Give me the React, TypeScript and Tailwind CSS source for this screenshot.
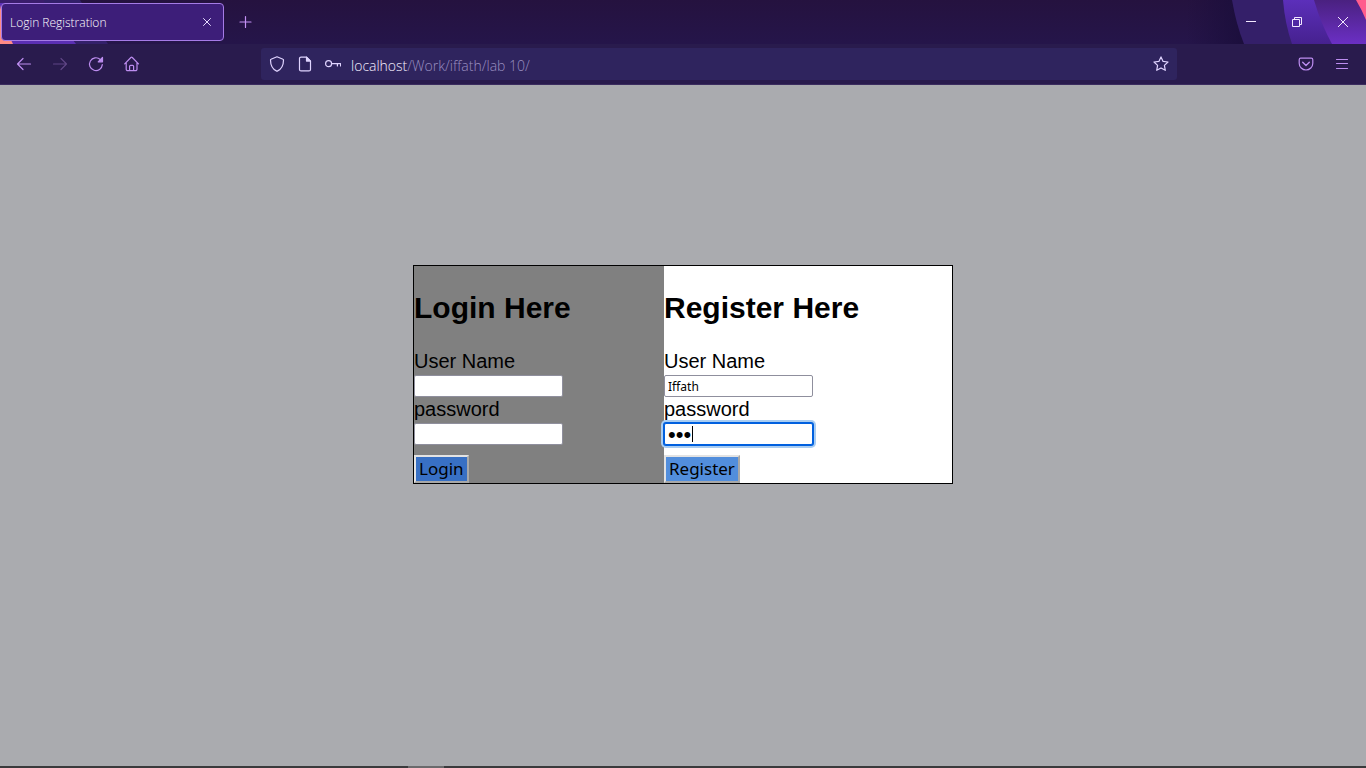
import type { ReactNode } from 'react';

function ThemeArt() {
  return (
    <div aria-hidden="true" className="absolute inset-0 flex justify-between overflow-hidden">
      <svg width="120" height="44" viewBox="0 0 120 44">
        <path d="M0 0H80L108 44H0Z" fill="#33206a" />
        <path d="M0 0H42L76 44H0Z" fill="#5b2fb4" />
        <path d="M0 0H44V3H0Z" fill="#3a1d6c" />
        <path d="M0 5C3 20 7 32 13 44H0Z" fill="#ff8a85" />
      </svg>
      <svg width="180" height="44" viewBox="0 0 180 44">
        <defs>
          <linearGradient id="shade" x1="0" x2="1" y1="0" y2="0">
            <stop offset="0" stopColor="#1b0e3c" stopOpacity="0" />
            <stop offset="1" stopColor="#1b0e3c" />
          </linearGradient>
          <linearGradient id="band" x1="0" x2="0" y1="0" y2="1">
            <stop offset="0" stopColor="#5c2fba" />
            <stop offset="1" stopColor="#46218f" />
          </linearGradient>
          <linearGradient id="edge" x1="0" x2="0" y1="0" y2="1">
            <stop offset="0" stopColor="#4a2180" />
            <stop offset="1" stopColor="#6b2fc4" />
          </linearGradient>
        </defs>
        <path d="M0 0H60V44H0Z" fill="url(#shade)" />
        <path d="M46 0H180V44H58Q50 24 46 0Z" fill="#341f69" />
        <path d="M97 0H180V44H106Q99 24 97 0Z" fill="url(#band)" />
        <path d="M128 0H180V44H146Q135 24 128 0Z" fill="url(#edge)" />
        <path d="M170 0H180V20Q176 10 170 0Z" fill="#ff5c8d" />
      </svg>
    </div>
  );
}

function Icon({ children, size = 16 }: { children: ReactNode; size?: number }) {
  return (
    <svg
      width={size}
      height={size}
      viewBox="0 0 16 16"
      fill="none"
      stroke="currentColor"
      strokeWidth="1.2"
      strokeLinecap="round"
      strokeLinejoin="round"
      aria-hidden="true"
    >
      {children}
    </svg>
  );
}

function IconButton({ label, className = '', children }: { label: string; className?: string; children: ReactNode }) {
  return (
    <button type="button" aria-label={label} className={`flex h-8 w-9 items-center justify-center ${className}`}>
      {children}
    </button>
  );
}

function TitleBar() {
  return (
    <header className="relative h-11 shrink-0 bg-linear-to-b from-[#25123f] to-[#25154a]">
      <ThemeArt />
      <div className="relative flex h-full items-center">
        <div className="ml-px flex h-[38px] w-[223px] items-center justify-between rounded-[4px] border border-[#a57be6] bg-[#3d1e79] pr-2 pl-2 text-white">
          <span className="pt-0.5 font-['Open_Sans','Noto_Sans',sans-serif] text-[12px] font-light">Login Registration</span>
          <button type="button" aria-label="Close tab" className="flex size-4 items-center justify-center text-[#e6dcff]">
            <svg width="8" height="8" viewBox="0 0 8 8" stroke="currentColor" strokeWidth="1" strokeLinecap="round" aria-hidden="true">
              <path d="M.5.5l7 7M7.5.5l-7 7" />
            </svg>
          </button>
        </div>
        <IconButton label="New tab" className="ml-1 text-[#c491f5]">
          <Icon>
            <path d="M7.500 2.500v11M2 8h11" />
          </Icon>
        </IconButton>
        <div className="ml-auto flex text-[#f3e9ff]">
          <button type="button" aria-label="Minimize" className="flex h-10 w-[46px] items-center justify-center">
            <svg width="10" height="10" viewBox="0 0 10 10" stroke="currentColor" aria-hidden="true">
              <path d="M0 4.5h10" />
            </svg>
          </button>
          <button type="button" aria-label="Restore" className="flex h-10 w-[46px] items-center justify-center">
            <svg width="10" height="10" viewBox="0 0 10 10" fill="none" stroke="currentColor" aria-hidden="true">
              <path d="M.5 2.5h7v7h-7zM2.5 2.5v-2h7v7h-2" />
            </svg>
          </button>
          <button type="button" aria-label="Close window" className="flex h-10 w-[46px] items-center justify-center">
            <svg width="10" height="10" viewBox="0 0 10 10" stroke="currentColor" aria-hidden="true">
              <path d="M0 0l10 10M10 0L0 10" />
            </svg>
          </button>
        </div>
      </div>
    </header>
  );
}

function AddressBar() {
  return (
    <div className="flex h-8 min-w-0 flex-1 items-center rounded-[3px] bg-[#2f245e] px-2 text-[#e0d4ff]">
      <Icon>
        <path d="M8 .8l6 2.4c.3.1.5.4.5.7 0 5-1.8 9-6.2 11.2a.7.7 0 0 1-.6 0C3.300 12.900 1.500 8.900 1.500 3.900c0-.3.200-.6.500-.7z" />
      </Icon>
      <span className="ml-3 flex">
        <Icon>
          <path d="M4 1.100h5.500l4 4V13.400a1.500 1.500 0 0 1-1.500 1.500H4a1.500 1.500 0 0 1-1.500-1.500V2.600A1.500 1.500 0 0 1 4 1.100z" />
          <path d="M9.500 1.100v4h4z" fill="currentColor" />
        </Icon>
      </span>
      <span className="ml-3 flex">
        <Icon>
          <circle cx="3.600" cy="7.700" r="3" />
          <path d="M6.600 7.700h9v2.200M12.400 7.700v2.200" />
        </Icon>
      </span>
      <span className="ml-2.5 flex-1 truncate pt-0.5 font-['Open_Sans','Noto_Sans',sans-serif] text-[14px] font-light text-[#9a8fc0]">
        <span className="text-[#f5efff]">localhost</span>/Work/iffath/lab 10/
      </span>
      <button type="button" aria-label="Bookmark this page">
        <Icon>
          <path d="M8 .9l2.100 4.500 4.900.6-3.600 3.400.9 4.900L8 11.900l-4.300 2.400.9-4.900L1 6l4.900-.6z" />
        </Icon>
      </button>
    </div>
  );
}

function Toolbar() {
  return (
    <nav aria-label="Browser toolbar" className="flex h-[41px] shrink-0 items-center border-b border-[#3b2c5f] bg-[#291b4d] px-1.5 text-[#bd8df0]">
      <div className="flex w-[255px] shrink-0">
        <IconButton label="Back">
          <Icon>
            <path d="M14.500 8h-13M7 2.500L1.500 8 7 13.500" />
          </Icon>
        </IconButton>
        <IconButton label="Forward" className="text-[#5f4585]">
          <Icon>
            <path d="M1.500 8h13M9 2.500L14.500 8 9 13.500" />
          </Icon>
        </IconButton>
        <IconButton label="Reload">
          <Icon>
            <path d="M14.300 8.600A6.400 6.400 0 1 1 12.300 3.500" />
            <path d="M14.500 1.500v4.300h-4.300z" fill="currentColor" />
          </Icon>
        </IconButton>
        <IconButton label="Home">
          <Icon>
            <path d="M.7 7.800L6.900 1.500a1 1 0 0 1 1.400 0L14.500 7.800M2.200 6.500v6.700a1.500 1.500 0 0 0 1.500 1.500h7.800a1.500 1.500 0 0 0 1.500-1.500V6.500M5.600 14.500V10.300a1 1 0 0 1 1-1h2a1 1 0 0 1 1 1v4.200" />
          </Icon>
        </IconButton>
      </div>
      <AddressBar />
      <div className="flex w-[183px] shrink-0 justify-end">
        <IconButton label="Save to Pocket">
          <Icon>
            <path d="M2.700 2.200h10.600a1.500 1.500 0 0 1 1.500 1.500v3.500a6.800 6.800 0 0 1-13.600 0V3.700a1.500 1.500 0 0 1 1.500-1.500z" />
            <path d="M4.700 6.300L8 9.500l3.300-3.200" strokeWidth="1.400" />
          </Icon>
        </IconButton>
        <IconButton label="Open menu">
          <Icon>
            <path d="M2.500 3.500h11M2.500 7.500h11M2.500 12.500h11" />
          </Icon>
        </IconButton>
      </div>
    </nav>
  );
}

const inputClass =
  'block h-[22px] w-[149px] rounded-[2px] border border-[#8f8f9d] bg-white px-[3px] text-black outline-none';
const textClass = "font-['Noto_Sans',sans-serif] text-[12px]";
const focusedClass =
  "border-[#0060df] caret-transparent shadow-[0_0_0_1px_#0060df,0_0_0_3px_#a9cdf2] font-['Liberation_Sans',sans-serif] text-[22px]";
const labelClass = 'block pb-0.5 text-[20px] leading-6';
const headingClass = 'mb-6 text-[30px] leading-[34px] font-bold';
const buttonClass =
  "mt-2.5 block h-7 border-2 border-t-[#e3e3e3] border-r-[#a8a8a8] border-b-[#a8a8a8] border-l-[#e3e3e3] px-[3px] font-['Noto_Sans',sans-serif] text-[17px] leading-6";

function LoginForm() {
  return (
    <form className="w-[250px] bg-[#808080] pt-[25px]">
      <h1 className={headingClass}>Login Here</h1>
      <label htmlFor="login-name" className={labelClass}>User Name</label>
      <input id="login-name" type="text" className={`${inputClass} ${textClass}`} />
      <label htmlFor="login-password" className={labelClass}>password</label>
      <input id="login-password" type="password" className={`${inputClass} ${textClass}`} />
      <button type="button" className={`${buttonClass} bg-[#3870c4]`}>Login</button>
    </form>
  );
}

function RegisterForm() {
  return (
    <form className="flex-1 bg-white pt-[25px]">
      <h1 className={headingClass}>Register Here</h1>
      <label htmlFor="register-name" className={labelClass}>User Name</label>
      <input id="register-name" type="text" defaultValue="Iffath" className={`${inputClass} ${textClass}`} />
      <label htmlFor="register-password" className={labelClass}>password</label>
      <div className="relative w-[149px]">
        <input id="register-password" type="password" defaultValue="abc" className={`${inputClass} ${focusedClass}`} />
        <span aria-hidden="true" className="absolute top-[3px] left-7 h-4 w-px bg-black" />
      </div>
      <button type="button" className={`${buttonClass} bg-[#528edc]`}>Register</button>
    </form>
  );
}

export default function App() {
  return (
    <div className="flex min-h-screen flex-col bg-[#aaabaf]">
      <TitleBar />
      <Toolbar />
      <main className="flex-1 pt-[180px] font-['Liberation_Sans',sans-serif] text-black">
        <div className="mx-auto flex max-w-[540px] border border-black">
          <LoginForm />
          <RegisterForm />
        </div>
      </main>
      <footer className="flex h-0.5 bg-[#3a3a3c]">
        <div className="ml-[408px] w-9 bg-[#6a6a6c]" />
      </footer>
    </div>
  );
}
